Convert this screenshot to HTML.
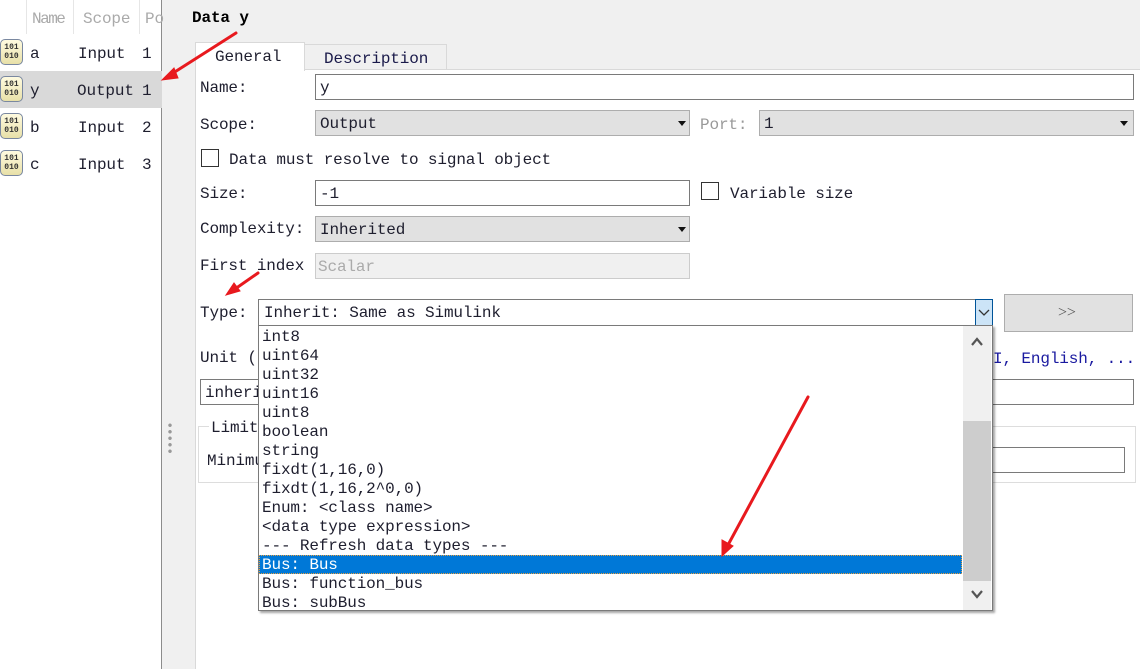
<!DOCTYPE html>
<html><head><meta charset="utf-8"><style>
*{box-sizing:border-box;margin:0;padding:0}
body{width:1140px;height:669px;position:relative;overflow:hidden;background:#f0f0f0;font-family:"Liberation Mono","Noto Sans CJK SC",monospace;font-size:16px;letter-spacing:-0.13px;color:#1e1e2e}
.a{position:absolute;white-space:nowrap}
.t{line-height:19px}
.box{position:absolute;border:1px solid #7a7a7a;background:#fff;padding-left:4px;line-height:26px}
.gbox{position:absolute;border:1px solid #adadad;background:#e1e1e1;padding-left:4px;line-height:26px}
.cb{position:absolute;width:18px;height:18px;border:1px solid #333;background:#fff}
.arr{position:absolute;width:0;height:0;border-left:4px solid transparent;border-right:4px solid transparent;border-top:5px solid #111}
.ic{position:absolute;left:0;width:23px;height:26px;border:1.5px solid #7a88a0;border-radius:5px;background:linear-gradient(#fffbe0,#e8e0a8);font-size:8px;font-weight:bold;line-height:9px;text-align:center;padding-top:3px;color:#333;letter-spacing:0}
</style></head><body>
<div class="a" style="left:0;top:0;width:162px;height:669px;background:#fff;border-right:1px solid #8c8c8c"></div>
<div class="a" style="left:26px;top:0;width:1px;height:34px;background:#e6e6e6"></div>
<div class="a" style="left:73px;top:0;width:1px;height:34px;background:#e6e6e6"></div>
<div class="a" style="left:139px;top:0;width:1px;height:34px;background:#e6e6e6"></div>
<div class="a" style="left:32px;top:10px;color:#aaa;letter-spacing:-1.5px">Name</div>
<div class="a" style="left:83px;top:10px;color:#aaa">Scope</div>
<div class="a" style="left:145px;top:10px;color:#aaa">Po</div>
<div class="a" style="left:0;top:71px;width:162px;height:37px;background:#d9d9d9"></div>
<div class="ic" style="top:39px">101<br>010</div>
<div class="ic" style="top:76px">101<br>010</div>
<div class="ic" style="top:113px">101<br>010</div>
<div class="ic" style="top:150px">101<br>010</div>
<div class="a" style="left:30px;top:45px">a</div><div class="a" style="left:78px;top:45px">Input</div><div class="a" style="left:142px;top:45px">1</div>
<div class="a" style="left:30px;top:82px">y</div><div class="a" style="left:77px;top:82px">Output</div><div class="a" style="left:142px;top:82px">1</div>
<div class="a" style="left:30px;top:119px">b</div><div class="a" style="left:78px;top:119px">Input</div><div class="a" style="left:142px;top:119px">2</div>
<div class="a" style="left:30px;top:156px">c</div><div class="a" style="left:78px;top:156px">Input</div><div class="a" style="left:142px;top:156px">3</div>
<div class="a" style="left:168px;top:422px;width:4px;height:32px;background:radial-gradient(circle,#999 1.5px,transparent 2px) 0 0/4px 6.5px"></div>
<div class="a" style="left:192px;top:9px;font-weight:bold;color:#000">Data y</div>
<div class="a" style="left:195px;top:69px;width:945px;height:600px;background:#fff;border-left:1px solid #d9d9d9;border-top:1px solid #d9d9d9"></div>
<div class="a" style="left:304px;top:44px;width:143px;height:26px;background:#f0f0f0;border:1px solid #d9d9d9"></div>
<div class="a" style="left:195px;top:42px;width:110px;height:29px;background:#fff;border:1px solid #d9d9d9;border-bottom:none"></div>
<div class="a" style="left:215px;top:48px">General</div>
<div class="a" style="left:324px;top:50px;color:#1a1a4a">Description</div>

<div class="a" style="left:200px;top:79px">Name:</div>
<div class="box" style="left:315px;top:74px;width:819px;height:26px">y</div>
<div class="a" style="left:200px;top:116px">Scope:</div>
<div class="gbox" style="left:315px;top:110px;width:375px;height:26px">Output</div><div class="arr" style="left:678px;top:121px"></div>
<div class="a" style="left:700px;top:116px;color:#999">Port:</div>
<div class="gbox" style="left:759px;top:110px;width:375px;height:26px">1</div><div class="arr" style="left:1120px;top:121px"></div>
<div class="cb" style="left:201px;top:149px"></div>
<div class="a" style="left:229px;top:151px">Data must resolve to signal object</div>
<div class="a" style="left:200px;top:185px">Size:</div>
<div class="box" style="left:315px;top:180px;width:375px;height:26px">-1</div>
<div class="cb" style="left:701px;top:182px"></div>
<div class="a" style="left:730px;top:185px">Variable size</div>
<div class="a" style="left:200px;top:220px">Complexity:</div>
<div class="gbox" style="left:315px;top:216px;width:375px;height:26px">Inherited</div><div class="arr" style="left:678px;top:227px"></div>
<div class="a" style="left:200px;top:257px">First index</div>
<div class="a" style="left:315px;top:253px;width:375px;height:26px;border:1px solid #ccc;background:#f0f0f0;color:#aaa;padding-left:2px;line-height:26px">Scalar</div>
<div class="a" style="left:200px;top:304px">Type:</div>
<div class="box" style="left:258px;top:299px;width:735px;height:27px;padding-left:5px">Inherit: Same as Simulink</div>
<div class="a" style="left:975px;top:299px;width:18px;height:27px;background:#cce4f7;border:1px solid #005499"></div>
<svg class="a" style="left:977px;top:307px" width="14" height="10"><path d="M2 3 L7 8 L12 3" fill="none" stroke="#333" stroke-width="1.3"/></svg>
<div class="a" style="left:1004px;top:294px;width:129px;height:38px;background:#e1e1e1;border:1px solid #adadad"></div>
<div class="a" style="left:1058px;top:304px;color:#555;font-family:'Liberation Serif',serif">&gt;&gt;</div>
<div class="a" style="left:200px;top:349px">Unit (</div>
<div class="a" style="left:993px;top:350px;color:#1a1aa0">I, English, ...</div>
<div class="box" style="left:200px;top:379px;width:934px;height:26px">inheri</div>
<div class="a" style="left:198px;top:426px;width:938px;height:57px;border:1px solid #ddd"></div>
<div class="a" style="left:209px;top:419px;background:#fff;padding:0 2px">Limit</div>
<div class="a" style="left:207px;top:452px">Minimu</div>
<div class="a" style="left:990px;top:447px;width:135px;height:26px;border:1px solid #7a7a7a;background:#fff"></div>
<div class="a" style="left:258px;top:325px;width:735px;height:286px;background:#fff;border:1px solid #7a7a7a;box-shadow:2px 2px 2px rgba(0,0,0,.35)"></div>
<div class="a" style="left:963px;top:326px;width:28px;height:284px;background:#f0f0f0"></div>
<div class="a" style="left:963px;top:421px;width:28px;height:160px;background:#cdcdcd"></div>
<svg class="a" style="left:970px;top:336px" width="14" height="12"><path d="M2 9 L7 3 L12 9" fill="none" stroke="#555" stroke-width="2.2"/></svg>
<svg class="a" style="left:970px;top:588px" width="14" height="12"><path d="M2 3 L7 9 L12 3" fill="none" stroke="#555" stroke-width="2.2"/></svg>
<div class="a" style="left:259px;top:555px;width:703px;height:19px;background:#0078d7;border:1px dotted #e8a040"></div>
<div class="a t" style="left:262px;top:328px">int8<br>uint64<br>uint32<br>uint16<br>uint8<br>boolean<br>string<br>fixdt(1,16,0)<br>fixdt(1,16,2^0,0)<br>Enum: &lt;class name&gt;<br>&lt;data type expression&gt;<br>--- Refresh data types ---<br><span style="color:#fff">Bus: Bus</span><br>Bus: function_bus<br>Bus: subBus</div>
<svg class="a" style="left:0;top:0" width="1140" height="669">
<g stroke="#e8191e" stroke-width="3" fill="#e8191e" stroke-linecap="round">
<line x1="236" y1="33" x2="170" y2="75"/><polygon points="162,80 174,68 178,78" stroke-width="1"/>
<line x1="258" y1="273" x2="235" y2="289"/><polygon points="226,295 234,283 240,291" stroke-width="1"/>
<line x1="808" y1="397" x2="728" y2="545"/><polygon points="722,556 722,540 733,546" stroke-width="1"/>
</g></svg>
</body></html>
